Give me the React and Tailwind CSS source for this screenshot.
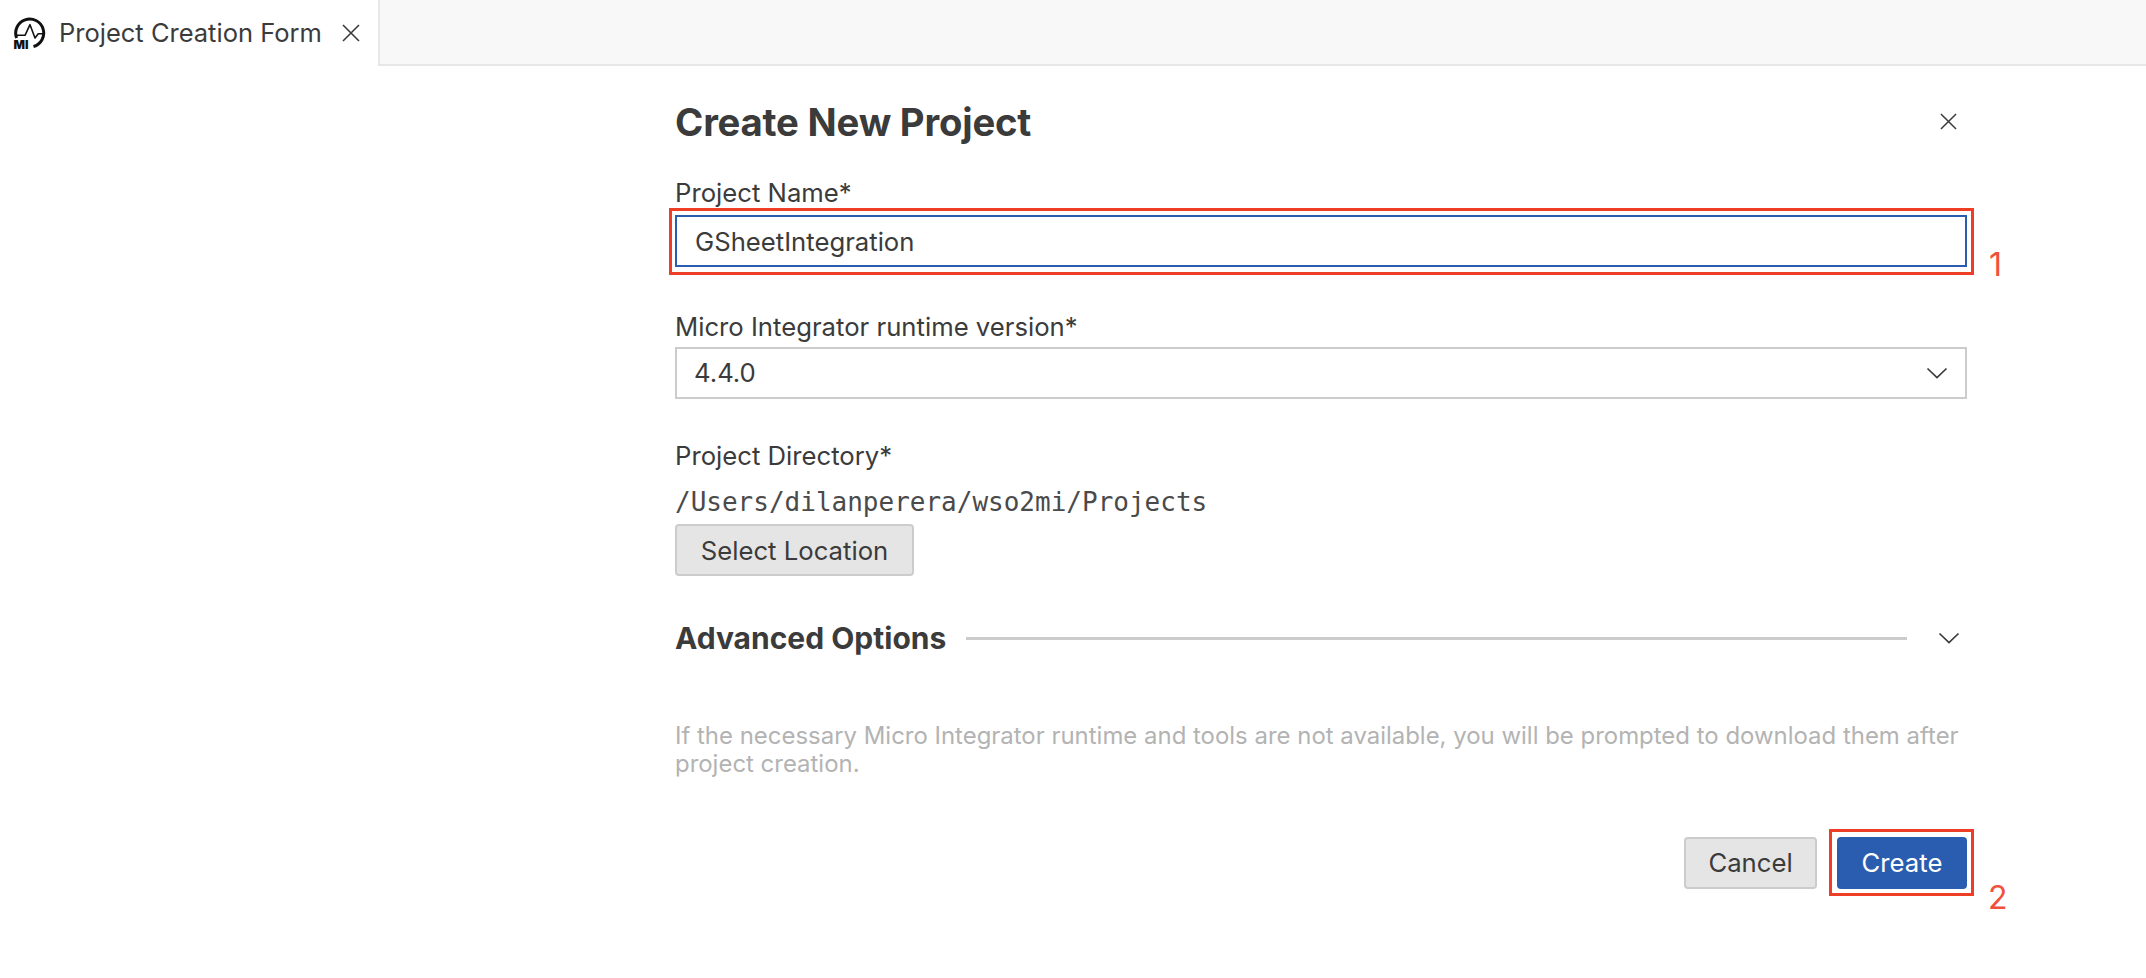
const sans = "font-['Inter','Noto_Sans',sans-serif]";

function Logo() {
  return (
    <svg width="36" height="36" viewBox="0 0 36 36" fill="none" className="shrink-0 mr-[-2px]">
      <path d="M3.6 23 A14 14 0 1 1 20.5 31.5" stroke="#111111" strokeWidth="3" />
      <path d="M3.7 20.3 H12 L17 9.7 L22 23 L25.3 18.7 H32" stroke="#111111" strokeWidth="1.6" strokeLinejoin="round" />
      <text x="0.5" y="33.8" fontFamily="Inter, sans-serif" fontWeight="900" fontSize="12" fill="#111">MI</text>
    </svg>
  );
}

function X({ size = 18, color = "#3b3b3b", width = 1.6 }) {
  return (
    <svg width={size} height={size} viewBox="0 0 18 18" fill="none" className="shrink-0">
      <path d="M1 1 L17 17 M17 1 L1 17" stroke={color} strokeWidth={width} />
    </svg>
  );
}

function Chevron({ color = "#3b3b3b" }) {
  return (
    <svg width="22" height="12" viewBox="0 0 22 12" fill="none" className="shrink-0">
      <path d="M1.5 1.5 L11 10.5 L20.5 1.5" stroke={color} strokeWidth="1.7" />
    </svg>
  );
}

export default function App() {
  return (
    <div className={`min-h-[978px] bg-white text-[#3b3b3b] ${sans}`}>
      <div className="flex h-[66px] bg-[#f8f8f8] border-b-2 border-[#e7e7e7]">
        <div className="flex h-[66px] w-[380px] items-center bg-white border-r-2 border-[#e7e7e7] pl-[13px] pr-[18px]">
          <Logo />
          <span className="ml-[12px] text-[25.5px] leading-none whitespace-nowrap">Project Creation Form</span>
          <span className="ml-auto"><X size={18} /></span>
        </div>
      </div>

      <div className="ml-[675px] w-[1292px] flex flex-col">
        <div className="flex items-center justify-between h-[50px] mt-[31px]">
          <h1 className="text-[38.3px] leading-none font-bold tracking-[-0.2px] whitespace-nowrap">Create New Project</h1>
          <span className="mr-[10px] mb-[2px]"><X size={17} /></span>
        </div>

        <label className="mt-[31px] text-[25.7px] leading-[29px]">Project Name*</label>
        <div className="relative mt-[8px]">
          <div className="h-[52px] border-[2px] border-[#2a5db0] flex items-center pl-[18px] pt-[2px] text-[25.7px]">GSheetIntegration</div>
          <div className="absolute left-[-6px] right-[-7px] top-[-7px] bottom-[-8px] border-[3px] border-[#ee3f26]"></div>
          <span className="absolute left-[1314px] top-[34px] text-[32px] leading-none text-[#f0503c]">1</span>
        </div>

        <label className="mt-[45px] text-[25.7px] leading-[29px]">Micro Integrator runtime version*</label>
        <div className="mt-[6px] h-[52px] border-[2px] border-[#cccccc] flex items-center justify-between pl-[17px] pr-[17px] text-[25.7px]">
          <span className="mt-[1px]">4.4.0</span>
          <Chevron />
        </div>

        <label className="mt-[42px] text-[25.7px] leading-[29px]">Project Directory*</label>
        <div className="mt-[18px] text-[26px] leading-[29px] text-[#4a4a4a] font-['DejaVu_Sans_Mono','Liberation_Mono',monospace]">/Users/dilanperera/wso2mi/Projects</div>
        <button className="mt-[7px] w-[239px] h-[52px] rounded-[4px] border-[2px] border-[#cccccc] bg-[#e5e5e5] pt-[2px] text-[25.7px]">Select Location</button>

        <div className="flex items-center mt-[42px] h-[40px]">
          <span className="text-[30px] font-bold leading-none whitespace-nowrap">Advanced Options</span>
          <div className="ml-[20px] w-[941px] h-[3px] bg-[#cccccc]"></div>
          <span className="ml-[31px]"><Chevron /></span>
        </div>

        <p className="mt-[64px] text-[23.95px] leading-[28px] text-[#b3b3b3]">If the necessary Micro Integrator runtime and tools are not available, you will be prompted to download them after project creation.</p>

        <div className="flex justify-end gap-[20px] mt-[59px]">
          <button className="w-[133px] h-[52px] rounded-[4px] border-[2px] border-[#cccccc] bg-[#e5e5e5] pt-[1px] text-[25.7px]">Cancel</button>
          <div className="relative">
            <button className="block w-[130px] h-[52px] rounded-[4px] bg-[#2a5db0] pt-[1px] text-white text-[25.7px]">Create</button>
            <div className="absolute left-[-8px] right-[-7px] top-[-8px] bottom-[-7px] border-[3px] border-[#ee3f26]"></div>
            <span className="absolute left-[151px] top-[45px] text-[32px] leading-none text-[#f0503c]">2</span>
          </div>
        </div>
      </div>
    </div>
  );
}
